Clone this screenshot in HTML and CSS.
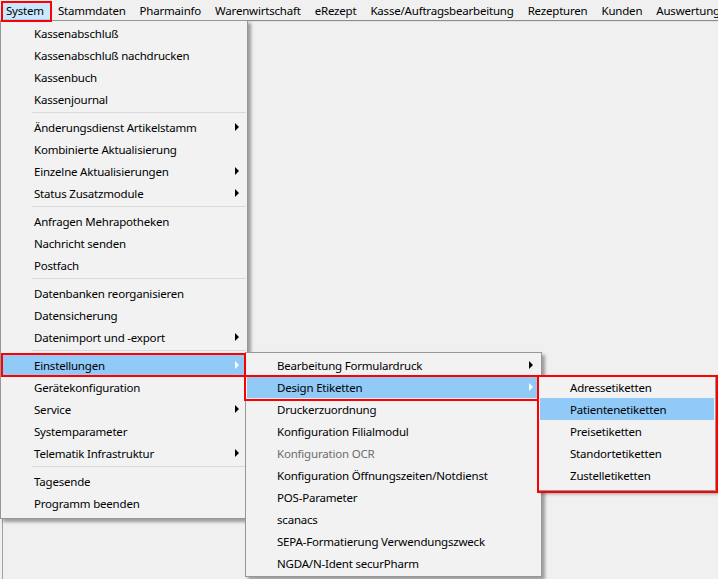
FILE: index.html
```html
<!DOCTYPE html>
<html lang="de">
<head>
<meta charset="utf-8">
<title>System-Menü</title>
<link rel="stylesheet" href="styles.css">
</head>
<body>
<div class="app">
  <nav class="menubar">
    <span class="mb-item active">System</span>
    <span class="mb-item">Stammdaten</span>
    <span class="mb-item">Pharmainfo</span>
    <span class="mb-item">Warenwirtschaft</span>
    <span class="mb-item">eRezept</span>
    <span class="mb-item">Kasse/Auftragsbearbeitung</span>
    <span class="mb-item">Rezepturen</span>
    <span class="mb-item">Kunden</span>
    <span class="mb-item">Auswertung</span>
  </nav>
  <div class="client"></div>

  <div class="menu main-menu">
    <div class="item">Kassenabschluß</div>
    <div class="item">Kassenabschluß nachdrucken</div>
    <div class="item">Kassenbuch</div>
    <div class="item">Kassenjournal</div>
    <div class="sep"></div>
    <div class="item sub">Änderungsdienst Artikelstamm<i class="arrow"></i></div>
    <div class="item">Kombinierte Aktualisierung</div>
    <div class="item sub">Einzelne Aktualisierungen<i class="arrow"></i></div>
    <div class="item sub">Status Zusatzmodule<i class="arrow"></i></div>
    <div class="sep"></div>
    <div class="item">Anfragen Mehrapotheken</div>
    <div class="item">Nachricht senden</div>
    <div class="item">Postfach</div>
    <div class="sep"></div>
    <div class="item">Datenbanken reorganisieren</div>
    <div class="item">Datensicherung</div>
    <div class="item sub">Datenimport und -export<i class="arrow"></i></div>
    <div class="sep"></div>
    <div class="item sub hl">Einstellungen<i class="arrow"></i></div>
    <div class="item">Gerätekonfiguration</div>
    <div class="item sub">Service<i class="arrow"></i></div>
    <div class="item">Systemparameter</div>
    <div class="item sub">Telematik Infrastruktur<i class="arrow"></i></div>
    <div class="sep"></div>
    <div class="item">Tagesende</div>
    <div class="item">Programm beenden</div>
  </div>

  <div class="menu sub1">
    <div class="item sub">Bearbeitung Formulardruck<i class="arrow"></i></div>
    <div class="item sub hl">Design Etiketten<i class="arrow"></i></div>
    <div class="item">Druckerzuordnung</div>
    <div class="item">Konfiguration Filialmodul</div>
    <div class="item disabled">Konfiguration OCR</div>
    <div class="item">Konfiguration Öffnungszeiten/Notdienst</div>
    <div class="item">POS-Parameter</div>
    <div class="item">scanacs</div>
    <div class="item">SEPA-Formatierung Verwendungszweck</div>
    <div class="item">NGDA/N-Ident securPharm</div>
  </div>

  <div class="menu sub2">
    <div class="item">Adressetiketten</div>
    <div class="item hl">Patientenetiketten</div>
    <div class="item">Preisetiketten</div>
    <div class="item">Standortetiketten</div>
    <div class="item">Zustelletiketten</div>
  </div>

  <div class="mark mark-system"></div>
  <div class="mark mark-einst"></div>
  <div class="mark mark-design"></div>
  <div class="mark mark-sub2"></div>
</div>
</body>
</html>
```

FILE: styles.css
```css
* { box-sizing: border-box; }
html, body {
  margin: 0;
  padding: 0;
  background: #f0f0f0;
}
body {
  font-family: "Noto Sans", "Open Sans", sans-serif;
  font-size: 11.5px;
  letter-spacing: -0.2px;
  color: #000;
}
.app {
  position: relative;
  width: 718px;
  height: 579px;
  overflow: hidden;
  background: #f0f0f0;
}
.menubar {
  display: flex;
  align-items: center;
  height: 21px;
  padding-left: 0;
  border-bottom: 1px solid #8c8c8c;
  background: #f0f0f0;
  white-space: nowrap;
}
.mb-item {
  padding: 0 6px;
  height: 19px;
  line-height: 18px;
  border: 1px solid transparent;
}
.mb-item.active {
  margin-left: 2px;
  padding: 0 6px 0 3px;
  background: #cce8ff;
  border-color: #99d1ff;
}
.client {
  height: calc(100% - 21px);
  margin-left: 2px;
  border-left: 1px solid #a0a0a0;
  border-top: 1px solid #e3e3e3;
}
.menu {
  position: absolute;
  background: #f2f2f2;
  border: 1px solid #979797;
  box-shadow: 3px 3px 3px rgba(0, 0, 0, 0.35);
  white-space: nowrap;
}
.main-menu {
  left: 0;
  top: 20px;
  width: 248px;
  padding: 1px 1px 4px 1px;
}
.sub1 {
  left: 245px;
  top: 352px;
  width: 297px;
  padding: 1px 1px 2px 1px;
}
.sub2 {
  left: 538px;
  top: 375px;
  width: 178px;
  padding: 0 1px 4px 1px;
}
.item {
  display: flex;
  align-items: center;
  height: 22px;
  padding-left: 30px;
}
.main-menu .item { padding-left: 32px; }
.item.hl { background: #91c9f7; }
.item.disabled { color: #6d6d6d; }
.arrow {
  display: block;
  margin-left: auto;
  margin-right: 7px;
  width: 0;
  height: 0;
  border-left: 4px solid #000;
  border-top: 4px solid transparent;
  border-bottom: 4px solid transparent;
}
.item.hl .arrow { border-left-color: #fff; }
.sep {
  height: 6px;
  margin-left: 30px;
  position: relative;
}
.sep::after {
  content: "";
  position: absolute;
  left: 0;
  right: 0;
  top: 2px;
  height: 1px;
  background: #dadada;
}
.mark {
  position: absolute;
  border: 2px solid #ff0000;
  pointer-events: none;
}
.mark-system { left: 1px; top: 1px; width: 51px; height: 21px; }
.mark-einst { left: 1px; top: 353px; width: 245px; height: 24px; }
.mark-design { left: 244px; top: 375px; width: 295px; height: 26px; }
.mark-sub2 { left: 537px; top: 375px; width: 181px; height: 118px; }
```
